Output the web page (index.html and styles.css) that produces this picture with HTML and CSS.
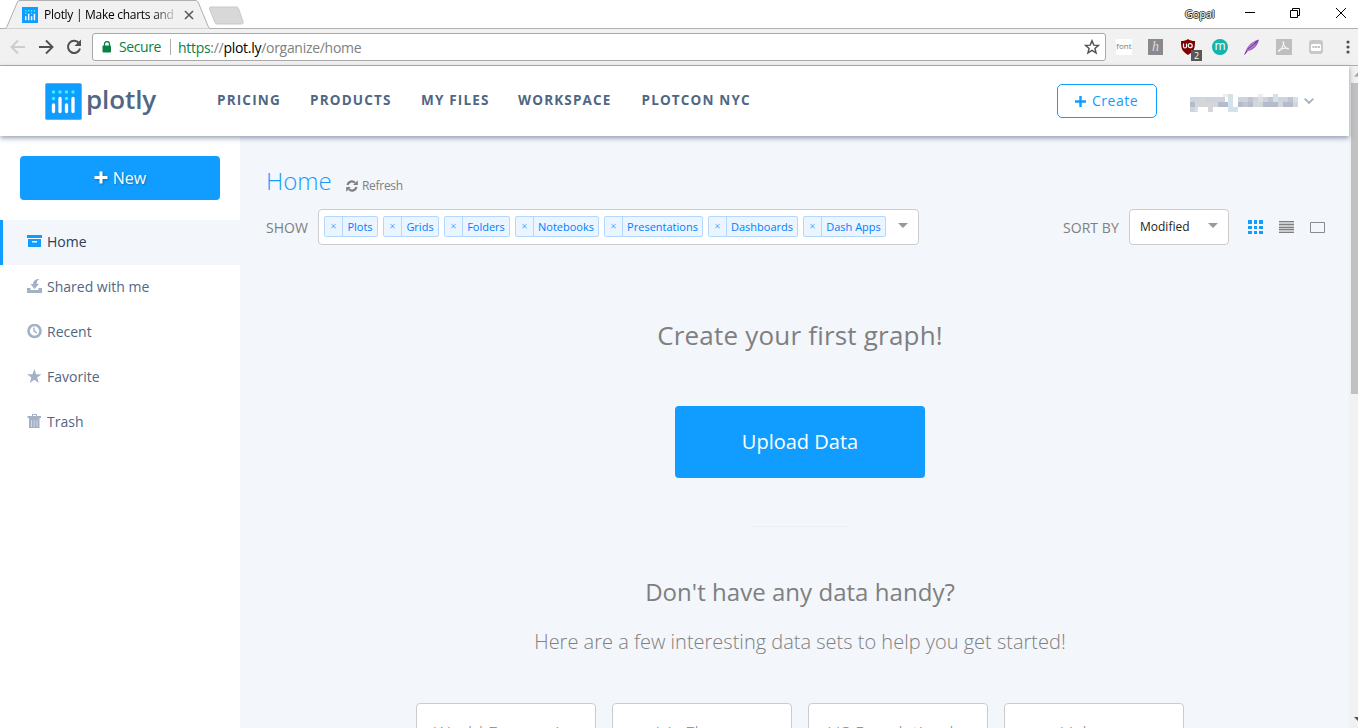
FILE: index.html
```html
<!DOCTYPE html>
<html lang="en">
<head>
<meta charset="utf-8">
<title>Plotly | Make charts and dashboards</title>
<link rel="stylesheet" href="styles.css">
</head>
<body>
<div class="browser">
  <div class="tabstrip">
    <svg class="tabshape" width="250" height="29" viewBox="0 0 250 29"><path d="M0 28.500H4c2 0 2.500-1 3-2L17 3c.7-2 1.500-2.500 3-2.500H195c2 0 2.800.8 3.500 2.500L208 26c.8 2 1.500 2.500 3 2.500H250V29H0Z" fill="#f1f1f1" stroke="#b0b0b0"/><path d="M211 7h25c1.500 0 2 .5 2.500 1.500l4.500 13c.4 1.500 0 2.500-1.500 2.500h-24c-1.500 0-2-.5-2.500-1.500L209.500 9c-.4-1.500 0-2 1.500-2Z" fill="#d8d8d8" stroke="#c8c8c8"/></svg>
    <div class="tab">
      <svg width="16" height="16" viewBox="0 0 36 36"><rect width="36" height="36" fill="#119dff"/><g stroke="#fff" stroke-width="3.200"><path d="M8.500 21v9M15 15v15M21.500 21v9M28 15v15"/></g><g fill="#25fefd"><path d="M7 7h3v3H7zM7 13h3v3H7zM13.500 7h3v3h-3zM20 7h3v3h-3zM20 13h3v3h-3zM26.500 7h3v3h-3z"/></g></svg>
      <span class="tab-title">Plotly | Make charts and d</span>
      <svg width="10" height="10" viewBox="0 0 10 10" stroke="#5a5a5a" stroke-width="1.600"><path d="M1 1l8 8M9 1l-8 8"/></svg>
    </div>
    <div class="window-tools">
      <span class="profile">Gopal</span>
      <svg width="108" height="12" viewBox="0 0 108 12" fill="none" stroke="#000"><path d="M0 5.500h10M45.500 3.500h7v7h-7zM47.500 3V1.500h7v7H53M91 1l10 10M101 1L91 11"/></svg>
    </div>
  </div>
  <div class="toolbar">
    <div class="nav-icons">
      <svg width="16" height="16" viewBox="0 0 16 16" fill="none" stroke="#ccc" stroke-width="1.900"><path d="M15 8H2M8 1.500L1.500 8 8 14.500"/></svg>
      <svg width="16" height="16" viewBox="0 0 16 16" fill="none" stroke="#505050" stroke-width="1.900"><path d="M1 8h13M8 1.500L14.500 8 8 14.500"/></svg>
      <svg width="16" height="16" viewBox="0 0 16 16"><path d="M13 4.200A6.100 6.100 0 1 0 14 9.500" fill="none" stroke="#505050" stroke-width="2"/><path d="M15 .5V7H8.500z" fill="#505050"/></svg>
    </div>
    <div class="omnibox">
      <svg width="10" height="12" viewBox="0 0 10 12"><path d="M2.500 5V3a2.500 2.500 0 0 1 5 0v2" fill="none" stroke="#0b8043" stroke-width="1.300"/><rect x=".5" y="4.500" width="8.500" height="7" rx=".8" fill="#0b8043"/></svg>
      <span class="secure">Secure</span>
      <span class="url"><span class="green">https</span>://<b>plot.ly</b>/organize/home</span>
      <svg class="bookmark" width="16" height="16" viewBox="0 0 16 16" fill="none" stroke="#505050" stroke-width="1.400"><path d="M8 1.700l1.800 4.400 4.700.3-3.600 3 1.200 4.600L8 11.400 3.900 14l1.200-4.600-3.600-3 4.700-.3z"/></svg>
    </div>
    <div class="extensions">
      <span class="ext ext-font">font</span>
      <span class="ext ext-h">h</span>
      <span class="ext ext-shield"><svg width="16" height="16" viewBox="0 0 16 16"><path d="M8 0c2 1.500 4 2 7 2 0 7-.5 10-7 14C1.500 12 1 9 1 2c3 0 5-.5 7-2z" fill="#800000"/><path d="M3.500 4.500v3c0 2 3 2 3 0v-3" fill="none" stroke="#fff" stroke-width="1.200"/><circle cx="10.200" cy="6.700" r="2" fill="none" stroke="#fff" stroke-width="1.200"/></svg><span class="count">2</span></span>
      <span class="ext ext-m">m</span>
      <svg width="16" height="16" viewBox="0 0 16 16"><path d="M1 15C2 9 6 3 15 .5 14 6 10 11 4 12z" fill="#9a5fc0"/><path d="M.5 15.500C4 10 8 6 14 1.500" fill="none" stroke="#65259a"/><path d="M3 12l8-6M5 8l6-5" stroke="#d1b0e2" stroke-width=".7"/></svg>
      <svg width="16" height="16" viewBox="0 0 16 16"><path fill="#bebebe" d="M0 0h16v16H0z"/><path d="M7 3c1.500-1 1 4-3.500 9-1 .8-2-.2.500-1.500 3-1.500 8-2 8.500-.8.500 1.500-5-1-5.500-6.700z" fill="none" stroke="#f4f4f4" stroke-width="1.100"/></svg>
      <svg width="16" height="16" viewBox="0 0 16 16"><rect x="1" y="1" width="14" height="14" rx="3" fill="#c8c8c8"/><rect x="3" y="5" width="10" height="7" rx="1.500" fill="#fff"/><path d="M4.500 8h2M7.200 8h2M9.900 8h2" stroke="#aaa" stroke-width="1.300"/></svg>
      <svg width="4" height="16" viewBox="0 0 4 16" fill="#505050"><circle cx="2" cy="3" r="1.600"/><circle cx="2" cy="8" r="1.600"/><circle cx="2" cy="13" r="1.600"/></svg>
    </div>
  </div>
</div>

<div class="viewport">
  <div class="page">
    <header class="header">
      <div class="logo">
        <svg width="37" height="37" viewBox="0 0 37 37"><rect x=".3" y=".3" width="36.400" height="36.400" rx="1.500" fill="#119dff"/><g stroke="#fff" stroke-width="3.300" stroke-linecap="round"><path d="M8.500 22v6.500M15 15.500v13M21.500 22v6.500M28 15.500v13"/></g><g fill="#25fefd"><circle cx="8.500" cy="9" r="1.700"/><circle cx="15" cy="9" r="1.700"/><circle cx="21.500" cy="9" r="1.700"/><circle cx="28" cy="9" r="1.700"/><circle cx="8.500" cy="15.500" r="1.700"/><circle cx="21.500" cy="15.500" r="1.700"/></g></svg>
        <span class="wordmark">plotly</span>
      </div>
      <nav class="menu"><a class="m1">PRICING</a><a class="m2">PRODUCTS</a><a class="m3">MY FILES</a><a class="m4">WORKSPACE</a><a class="m5">PLOTCON NYC</a></nav>
      <a class="create"><svg width="11" height="11" viewBox="0 0 11 11" stroke="#119dff" stroke-width="2.400"><path d="M5.500 0v11M0 5.500h11"/></svg><span>Create</span></a>
      <div class="user">
        <svg width="109" height="18" viewBox="0 0 109 18" shape-rendering="crispEdges">
          <path fill="#cdd3df" d="M0 3h10v5H0zM15 3h20v5H15zM48 3h10v5H48zM63 3h15v5H63zM83 3h15v5H83zM0 13h5v5H0z"/>
          <path fill="#b4bccb" d="M0 8h5v5H0zM28 8h10v5H28zM48 8h5v5h-5zM58 8h5v5h-5zM73 8h15v5H73zM93 8h10v5H93z"/>
          <path fill="#d6d6da" d="M5 8h10v5H5zM15 8h13v5H15zM63 8h10v5H63zM88 8h5v5h-5zM18 13h5v5h-5zM10 3h5v5h-5zM103 8h5v5h-5z"/>
          <path fill="#d3e1ec" d="M38 0h5v13h-5zM38 13h10v5H38zM68 0h5v8h-5zM83 0h5v8h-5zM103 3h5v5h-5zM5 13h3v5H5z"/>
          <path fill="#f8eae5" d="M33 0h5v3h-5zM68 0h5v3h-5z"/><path fill="#c3c5cd" d="M53 8h5v5h-5zM78 3h5v5h-5zM98 3h5v5h-5zM58 3h5v5h-5z"/>
        </svg>
        <svg width="10" height="6" viewBox="0 0 10 6" fill="none" stroke="#a2b1c6" stroke-width="1.800"><path d="M.7.7L5 5 9.300.7"/></svg>
      </div>
    </header>
    <div class="body">
      <aside class="sidebar">
        <a class="new"><svg width="14" height="14" viewBox="0 0 14 14" stroke="#fff" stroke-width="3"><path d="M7 .5v12M.5 6.500h13"/></svg><span>New</span></a>
        <a class="item active"><svg width="15" height="15" viewBox="0 0 15 15"><path d="M0 1h15v3H0z"/><path fill-rule="evenodd" d="M1 5h13v8H1zM5 7h5v1.500H5z"/></svg><span>Home</span></a>
        <a class="item"><svg width="15" height="15" viewBox="0 0 15 15"><path d="M0 9h3.500v2h8V9H15v5H0z"/><path d="M12.500 0C10 1 9.800 3 9.800 5H12L7.500 10 3.500 5H6C6 2 8.500 0 12.500 0z"/></svg><span>Shared with me</span></a>
        <a class="item"><svg width="15" height="15" viewBox="0 0 15 15"><circle cx="7.500" cy="7" r="6" fill="none" stroke="#a2b1c6" stroke-width="2.600"/><path d="M7 3.500V7l3 2" fill="none" stroke="#a2b1c6" stroke-width="1.500"/></svg><span>Recent</span></a>
        <a class="item"><svg width="15" height="15" viewBox="0 0 15 15"><path d="M7.300 0L9.100 5.300H14.500L10.200 8.600 11.800 14 7.300 10.700 2.800 14 4.400 8.600 0 5.300H5.500z"/></svg><span>Favorite</span></a>
        <a class="item"><svg width="15" height="15" viewBox="0 0 15 15"><path fill-rule="evenodd" d="M5 0h5v2h4v2H.5V2H5zM6 1v1h3V1zM2 4h10.500v10H2z"/><path d="M4.500 6v7M7.200 6v7M10 6v7" stroke="#dbe2ec" stroke-width=".8"/></svg><span>Trash</span></a>
      </aside>
      <main class="main">
        <div class="heading"><h1>Home</h1><a class="refresh"><svg width="12" height="12" viewBox="0 0 12 12"><path d="M1.500 5A4.500 4.500 0 0 1 9 2.700M10.500 7A4.500 4.500 0 0 1 3 9.300" fill="none" stroke="#7f7f7f" stroke-width="2.200"/><path fill="#7f7f7f" d="M11.800.3V5H7.100zM.2 11.700V7h4.700z"/></svg><span>Refresh</span></a></div>
        <div class="filters">
          <span class="label show">SHOW</span>
          <div class="select multi">
            <span class="tag t1"><i>×</i><b>Plots</b></span><span class="tag t2"><i>×</i><b>Grids</b></span><span class="tag t3"><i>×</i><b>Folders</b></span><span class="tag t4"><i>×</i><b>Notebooks</b></span><span class="tag t5"><i>×</i><b>Presentations</b></span><span class="tag t6"><i>×</i><b>Dashboards</b></span><span class="tag t7"><i>×</i><b>Dash Apps</b></span>
            <span class="arrow"></span>
          </div>
          <span class="label sort">SORT BY</span>
          <div class="select single"><span>Modified</span><span class="arrow"></span></div>
          <div class="views">
            <svg width="15" height="15" viewBox="0 0 15 15" fill="#119dff" shape-rendering="crispEdges"><path d="M0 0h4v4H0zM6 0h3v4H6zM11 0h4v4h-4zM0 6h4v3H0zM6 6h3v3H6zM11 6h4v3h-4zM0 11h4v3H0zM6 11h3v3H6zM11 11h4v3h-4z"/></svg>
            <svg width="15" height="15" viewBox="0 0 15 15" shape-rendering="crispEdges"><path fill="#c9cbce" d="M0 1h15v12H0z"/><path stroke="#7f7f7f" d="M0 1.500h15M0 4.500h15M0 7.500h15M0 9.500h15M0 12.500h15"/></svg>
            <svg width="15" height="15" viewBox="0 0 15 15"><path fill="none" stroke="#8a8a8a" d="M.5 2.500h14v10H.5z"/></svg>
          </div>
        </div>
        <section class="empty">
          <h2>Create your first graph!</h2>
          <a class="upload">Upload Data</a>
          <hr>
          <h3>Don't have any data handy?</h3>
          <p>Here are a few interesting data sets to help you get started!</p>
          <div class="cards"><div>World Economies</div><div>Iris Flowers</div><div>US Population by State</div><div>Volcano</div></div>
        </section>
      </main>
    </div>
  </div>
  <div class="scrollbar"><svg width="9" height="17" viewBox="0 0 9 17"><path d="M5 10.500L9 6.500v4z" fill="#a0a0a0"/></svg><span class="thumb"></span><svg class="down" width="9" height="17" viewBox="0 0 9 17"><path d="M5 6h4v4z" fill="#505050"/></svg></div>
</div>
</body>
</html>
```
FILE: styles.css
```css
* { box-sizing: border-box; }
body { margin: 0; width: 1358px; height: 728px; overflow: hidden; font-family: "Open Sans", sans-serif; background: #fff; display: flex; flex-direction: column; }
svg { display: block; flex: none; }
span, a { white-space: nowrap; }

.browser { height: 66px; flex: none; }
.tabstrip { height: 29px; display: flex; border-bottom: 1px solid #b0b0b0; position: relative; }
.tabshape { position: absolute; left: 0; top: 0; }
.tab { position: relative; display: flex; align-items: center; margin-left: 22px; width: 172px; height: 29px; }
.tab-title { font-size: 12px; width: 133px; margin: 0 7px 0 6px; overflow: hidden; letter-spacing: -.28px; -webkit-mask-image: linear-gradient(90deg, #000 108px, transparent 135px); mask-image: linear-gradient(90deg, #000 108px, transparent 135px); }
.window-tools { margin-left: auto; display: flex; align-items: flex-start; padding: 7px 5px 0 0; }
.profile { font-size: 11px; line-height: 14px; width: 30px; margin-right: 30px; letter-spacing: -.2px; color: #fff; text-shadow: 1px 0 #333, -1px 0 #333, 0 1px #333, 0 -1px #333; }
.toolbar { height: 37px; background: #f1f1f1; border-bottom: 1px solid #b0b0b0; display: flex; align-items: center; padding-left: 10px; }
.nav-icons { display: flex; gap: 12px; width: 82px; }
.omnibox { width: 1014px; height: 28px; border: 1px solid #a8a8a8; border-radius: 3px; background: #fff; display: flex; align-items: center; padding: 0 5px 0 9px; font-size: 14px; color: #808080; }
.secure { color: #0b8043; margin-left: 7px; width: 52px; border-right: 1px solid #b0b0b0; line-height: 16px; letter-spacing: -.4px; }
.url { margin-left: 7px; letter-spacing: -.29px; }
.url b { font-weight: 400; color: #000; }
.green { color: #0b8043; }
.bookmark { margin-left: auto; }
.extensions { display: flex; gap: 16px; margin-left: 10px; align-items: center; }
.ext { width: 16px; height: 16px; text-align: center; line-height: 16px; flex: none; }
.ext-font { background: #fff; font-size: 8px; line-height: 14px; color: #777; }
.ext-h { background: #8a8a8a; color: #ddd; font: italic 14px/16px "Liberation Serif", serif; width: 15px; margin-right: 1px; }
.ext-shield { position: relative; }
.count { position: absolute; left: 11px; top: 11px; width: 11px; height: 11px; background: #585858; color: #fff; font-size: 9px; line-height: 11px; }
.ext-m { border-radius: 50%; background: #12b5ad; color: #fff; font-size: 12px; line-height: 14px; }
.extensions svg:last-child { margin-left: 6px; }

.viewport { display: flex; height: 662px; }
.page { width: 1349px; flex: none; display: flex; flex-direction: column; }
.header { position: relative; z-index: 1; height: 70px; flex: none; display: flex; align-items: center; background: #fff; box-shadow: 0 2px 5px rgba(42, 63, 95, .5); padding-left: 45px; }
.logo { display: flex; width: 172px; align-items: center; }
.wordmark { font: 600 26px/32px "Open Sans", sans-serif; letter-spacing: -.1px; margin: -4px 0 0 4px; color: #506784; }
.menu { display: flex; font-size: 13.500px; font-weight: 700; color: #506784; letter-spacing: 1.170px; width: 840px; margin-top: -3px; }
.m1 { width: 93px; } .m2 { width: 111px; } .m3 { width: 97px; } .m4 { width: 123.500px; }
.create { width: 100px; height: 34px; border: 1px solid #119dff; border-radius: 5px; display: flex; align-items: center; padding-left: 17px; gap: 6px; font-size: 14px; color: #119dff; letter-spacing: .5px; }
.create span { margin-top: -2px; }
.user { display: flex; align-items: center; margin-left: 33px; gap: 5px; }
.user svg:first-child { margin-top: 3px; }
.body { display: flex; flex: 1; min-height: 0; }
.sidebar { width: 240px; background: #fff; flex: none; padding-top: 20px; }
.new { display: flex; align-items: center; justify-content: center; gap: 5px; width: 200px; height: 44px; margin: 0 20px 20px; background: #119dff; border-radius: 4px; color: #fff; font-size: 16px; text-shadow: 1px 1px 2px rgba(0, 0, 0, .3); }
.new svg { filter: drop-shadow(1px 1px 1px rgba(0, 0, 0, .3)); }
.item { height: 45px; display: flex; align-items: center; gap: 5px; padding: 0 0 2px 27px; font-size: 14px; color: #506784; }
.item svg { fill: #a2b1c6; }
.item.active { background: #f3f6fa; border-left: 3px solid #119dff; padding-left: 24px; color: #2a3f5f; }
.item.active svg { fill: #119dff; }
.main { flex: 1; background: #f3f6fb; padding: 26px 0 0 26px; overflow: hidden; }
.heading { display: flex; height: 40px; }
h1 { margin: -1px 0 0; font-size: 24px; line-height: 40px; font-weight: 300; color: #119dff; width: 80px; }
.refresh { display: flex; align-items: center; font-size: 12px; color: #7f7f7f; gap: 4px; padding-top: 7px; letter-spacing: -.3px; }
.filters { display: flex; align-items: center; height: 36px; margin-top: 7px; }
.label { color: #7f7f7f; font-size: 14px; margin-top: 1px; }
.show { width: 52px; }
.select { height: 36px; background: #fff; border: 1px solid #ccc; border-radius: 4px; display: flex; align-items: center; }
.multi { width: 601px; padding: 0 10px 0 5px; gap: 5px; }
.tag { display: flex; height: 21px; margin-top: -1px; border: 1px solid #b3d7ff; border-radius: 2px; background: #ebf5ff; color: #007eff; font-size: 11px; line-height: 20px; overflow: hidden; }
.tag i { width: 18px; text-align: center; font-style: normal; font-weight: 300; font-size: 11px; line-height: 18px; border-right: 1px solid #b3d7ff; flex: none; }
.tag b { flex: 1; font-weight: 400; text-align: center; }
.t1 { width: 54px; } .t2 { width: 56px; } .t3 { width: 66px; } .t4 { width: 84px; } .t5 { width: 99px; } .t6 { width: 90px; } .t7 { width: 83px; }
.arrow { border: 5px solid transparent; border-top-color: #999; border-bottom: 0; margin: -3px 0 0 auto; }
.sort { margin-left: 144px; width: 66px; letter-spacing: .05px; }
.single { width: 100px; padding: 0 10px; font-size: 12px; color: #222; }
.single span:first-child { margin-top: -1px; }
.views { display: flex; gap: 16px; margin-left: 19px; }
.empty { width: 1068px; display: flex; flex-direction: column; align-items: center; color: #7f7f7f; }
.empty h2, .empty h3 { font-weight: 400; margin: 0; white-space: nowrap; }
.empty h2 { font-size: 26px; line-height: 40px; margin-top: 70px; letter-spacing: .2px; }
.upload { width: 250px; height: 72px; margin-top: 51px; border-radius: 4px; background: #119dff; color: #fff; font-size: 20px; line-height: 72px; text-align: center; }
.empty hr { width: 100px; height: 1px; border: 0; background: #ebf0f0; margin: 48px 0 0; }
.empty h3 { font-size: 24px; line-height: 36px; margin-top: 47px; letter-spacing: .04px; }
.empty p { margin: 15px 0 0; font-size: 20px; line-height: 34px; font-weight: 300; white-space: nowrap; }
.cards { display: flex; gap: 16px; margin-top: 44px; }
.cards div { width: 180px; height: 180px; padding: 16px 10px; border: 1px solid #ccc; border-radius: 4px; background: #fff; font-size: 18px; line-height: 27px; font-weight: 300; letter-spacing: .2px; text-align: center; }
.scrollbar { width: 9px; height: 662px; background: #f1f1f1; display: flex; flex-direction: column; }
.thumb { height: 311px; margin-left: 2px; background: #c1c1c1; }
.down { margin-top: auto; }
```
